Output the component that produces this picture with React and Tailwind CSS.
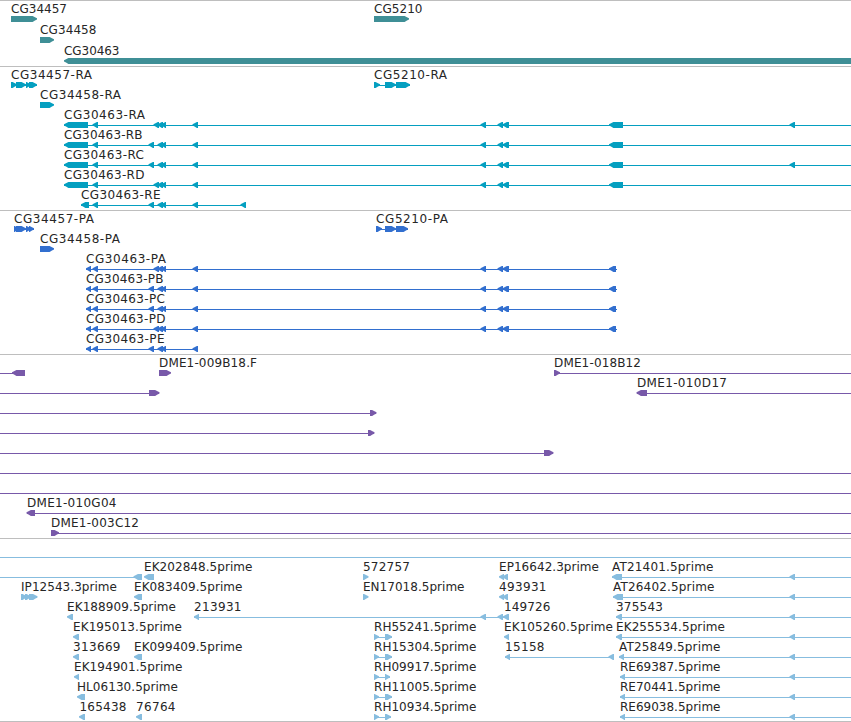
const WIDTH = 851

// exon blocks shared by the CG30463 isoforms
const NEAR = [[153.5, 159], [157.5, 163], [161, 166]]
const SPLIT = [[148.5, 154], [157.5, 163], [161, 166]]
const MIDDLE = [[192.5, 198], [480.5, 486], [497.5, 503], [502.5, 509]]

// feature: x / right = label extent, dir = strand, line = intron span, exons = blocks
const f = (label, x, right, dir, line, exons) => ({ label, x, right, dir, line, exons })

const rna = (label, right, cluster, tail) =>
  f(label, 64, right, 'left', [64, WIDTH], [[64, 88], [92.5, 98], ...cluster, ...MIDDLE, [609, 623], ...tail])

const protein = (label, right, cluster) =>
  f(label, 86, right, 'left', [86, 617], [[86, 91], [92.5, 98], ...cluster, ...MIDDLE, [609, 616]])

const est = (label, x, right, end) => f(label, x, right, 'left', [x, WIDTH], [[x, end], [789.5, 795]])

const rh = (label, end) => f(label, 374, 476.5, 'right', [374, end], [[374, 379], [385, end]])

const TRACKS = [
  {
    name: 'genes',
    color: 'text-[#3f8f96]',
    rowClass: 'h-[21px]',
    rows: [
      [f('CG34457', 11, 67, 'right', null, [[11, 37]]), f('CG5210', 374, 422.5, 'right', null, [[374, 409]])],
      [f('CG34458', 40, 96.5, 'right', null, [[40, 54]])],
      [f('CG30463', 64, 119.5, 'left', null, [[64, WIDTH]])],
    ],
  },
  {
    name: 'transcripts',
    color: 'text-[#049fc0]',
    rowClass: 'h-5',
    rows: [
      [
        f('CG34457-RA', 11, 92, 'right', [11, 37], [[11, 17], [16, 26], [26, 31], [29, 37]]),
        f('CG5210-RA', 374, 447, 'right', [374, 410], [[374, 380], [385, 396], [396, 410]]),
      ],
      [f('CG34458-RA', 40, 121, 'right', null, [[40, 54]])],
      [rna('CG30463-RA', 145, NEAR, [[789.5, 795]])],
      [rna('CG30463-RB', 142.5, SPLIT, [])],
      [rna('CG30463-RC', 144, SPLIT, [[789.5, 795]])],
      [rna('CG30463-RD', 144.5, NEAR, [])],
      [f('CG30463-RE', 81, 160.5, 'left', [81, 246], [[81, 89], [92.5, 98], ...SPLIT, [192.5, 198], [240.5, 246]])],
    ],
  },
  {
    name: 'proteins',
    color: 'text-[#326fcf]',
    rowClass: 'h-5',
    rows: [
      [
        f('CG34457-PA', 14, 94, 'right', [14, 34], [[14, 19], [16, 26], [26, 31], [29, 34]]),
        f('CG5210-PA', 376, 448, 'right', [376, 408], [[376, 382], [385, 396], [396, 408]]),
      ],
      [f('CG34458-PA', 40, 120, 'right', null, [[40, 54]])],
      [protein('CG30463-PA', 166, NEAR)],
      [protein('CG30463-PB', 163.5, SPLIT)],
      [protein('CG30463-PC', 165, SPLIT)],
      [protein('CG30463-PD', 165.5, NEAR)],
      [f('CG30463-PE', 86, 164.5, 'left', [86, 198], [[86, 91], [92.5, 98], ...SPLIT, [192.5, 198]])],
    ],
  },
  {
    name: 'clones',
    color: 'text-[#7859a9]',
    rowClass: 'h-5',
    rows: [
      [
        f('', 0, 0, 'left', [0, 25], [[12, 25]]),
        f('DME1-009B18.F', 159, 257, 'right', null, [[159, 171]]),
        f('DME1-018B12', 554, 641, 'right', [554, WIDTH], [[554, 560]]),
      ],
      [
        f('', 0, 0, 'right', [0, 159], [[149, 159.5]]),
        f('DME1-010D17', 637, 727, 'left', [637, WIDTH], [[636.5, 647]]),
      ],
      [f('', 0, 0, 'right', [0, 376], [[370, 376.5]])],
      [f('', 0, 0, 'right', [0, 374], [[368, 374.5]])],
      [f('', 0, 0, 'right', [0, 553], [[544, 553.5]])],
      [f('', 0, 0, 'right', [0, WIDTH], [])],
      [f('', 0, 0, 'right', [0, WIDTH], [])],
      [f('DME1-010G04', 27, 116.5, 'left', [27, WIDTH], [[26.5, 35]])],
      [f('DME1-003C12', 51, 139, 'right', [51, WIDTH], [[51, 59]])],
    ],
  },
  {
    name: 'cdna',
    color: 'text-[#87bddf]',
    rowClass: 'h-5',
    rows: [
      [f('', 0, 0, 'right', [0, WIDTH], [])],
      [
        f('', 0, 0, 'left', [0, 142], [[133.5, 142]]),
        f('EK202848.5prime', 144, 252.5, 'left', null, [[144, 154]]),
        f('572757', 363, 410, 'right', null, [[363, 368.5]]),
        f('EP16642.3prime', 499, 599, 'left', null, [[499, 504], [502.5, 508]]),
        est('AT21401.5prime', 612, 713.5, 622),
      ],
      [
        f('IP12543.3prime', 21, 117, 'right', [21, 37], [[21, 27], [25, 31], [29, 37.5]]),
        f('EK083409.5prime', 134, 242.5, 'left', null, [[134, 142]]),
        f('EN17018.5prime', 363, 464.5, 'right', null, [[363, 368.5]]),
        f('493931', 499, 546.5, 'left', null, [[499, 504], [502.5, 508]]),
        est('AT26402.5prime', 613, 714.5, 623),
      ],
      [
        f('EK188909.5prime', 67, 176, 'left', null, [[67, 73]]),
        f('213931', 194, 241.5, 'left', [194, 509], [[194, 199], [480.5, 486], [497.5, 503]]),
        f('149726', 504, 550.5, 'left', null, [[503, 509]]),
        est('375543', 616, 663, 622),
      ],
      [
        f('EK195013.5prime', 73, 182, 'left', null, [[73, 79]]),
        rh('RH55241.5prime', 392),
        f('EK105260.5prime', 504, 613, 'left', null, [[504, 509]]),
        est('EK255534.5prime', 616, 725, 622),
      ],
      [
        f('313669', 73, 120.5, 'left', null, [[73, 79]]),
        f('EK099409.5prime', 134, 242.5, 'left', null, [[134, 142]]),
        rh('RH15304.5prime', 392),
        f('15158', 505, 544.5, 'left', [505, 614], [[505, 510], [608.5, 614]]),
        est('AT25849.5prime', 619, 720.5, 624),
      ],
      [
        f('EK194901.5prime', 74, 182.5, 'left', null, [[74, 79]]),
        rh('RH09917.5prime', 390),
        est('RE69387.5prime', 620, 720.5, 625),
      ],
      [
        f('HL06130.5prime', 77, 178, 'left', null, [[77, 85]]),
        rh('RH11005.5prime', 392),
        est('RE70441.5prime', 620, 720.5, 625),
      ],
      [
        f('165438', 79.5, 126.5, 'left', null, [[79, 85]]),
        f('76764', 136, 175.5, 'left', null, [[136, 142]]),
        rh('RH10934.5prime', 391),
        est('RE69038.5prime', 620, 720.5, 625),
      ],
    ],
  },
]

// block with a blunt, slightly rounded head on the strand side
function Exon({ start, end, dir }) {
  const tip = dir === 'left' ? start : end
  const base = dir === 'left' ? end : start
  const s = dir === 'left' ? 1 : -1
  const points = [
    [tip, 17.3],
    [tip + s * 2, 16.2],
    [tip + s * 4.4, 15],
    [base, 15],
    [base, 21],
    [tip + s * 4.4, 21],
    [tip + s * 2, 19.5],
    [tip, 18.5],
  ]
  return <polygon points={points.map((p) => p.join(',')).join(' ')} fill="currentColor" />
}

function Feature({ feature }) {
  const { label, x, right, dir, line, exons } = feature
  return (
    <g>
      {line && <rect x={line[0]} y="18" width={line[1] - line[0]} height="1" fill="currentColor" />}
      {exons.map(([start, end]) => (
        <Exon key={start} start={start} end={end} dir={dir} />
      ))}
      {label && (
        <text x={x} y="12" textLength={right - x} className="fill-neutral-800">
          {label}
        </text>
      )}
    </g>
  )
}

function Track({ track }) {
  return (
    <section className={`border-t border-[#bebebe] ${track.color}`}>
      {track.rows.map((row, i) => (
        <div key={i} className={track.rowClass}>
          <svg width={WIDTH} height="21" className="block overflow-visible font-['DejaVu_Sans',sans-serif] text-[12px]">
            {row.map((feature, j) => (
              <Feature key={j} feature={feature} />
            ))}
          </svg>
        </div>
      ))}
    </section>
  )
}

export default function App() {
  return (
    <div className="grid h-[722px] w-[851px] grid-rows-[66px_144px_144px_184px_183px] overflow-hidden border-b border-[#bebebe] bg-white">
      {TRACKS.map((track) => (
        <Track key={track.name} track={track} />
      ))}
    </div>
  )
}
